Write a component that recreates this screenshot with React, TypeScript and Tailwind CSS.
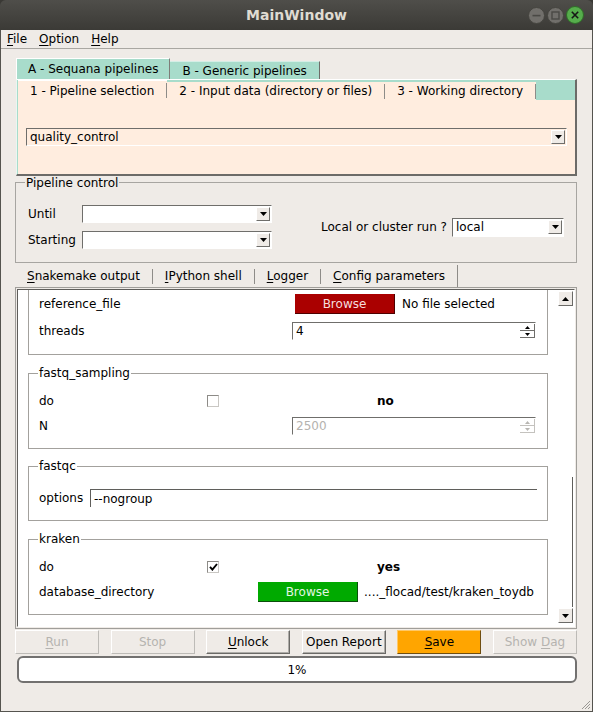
import type { ReactNode } from "react";

function Mn({ children }: { children: ReactNode }) {
  return <span className="underline decoration-1 underline-offset-[2px]">{children}</span>;
}

function DownArrow({ color = "#000" }: { color?: string }) {
  return (
    <svg width="7" height="4" viewBox="0 0 7 4">
      <path d="M0 0H7L3.5 4Z" fill={color} />
    </svg>
  );
}

function UpArrow({ color = "#000" }: { color?: string }) {
  return (
    <svg width="7" height="4" viewBox="0 0 7 4">
      <path d="M0 4H7L3.5 0Z" fill={color} />
    </svg>
  );
}

function Combo({ value, className = "" }: { value?: string; className?: string }) {
  return (
    <div
      className={`flex h-[18px] items-center border border-t-[#6f6e6b] border-l-[#6f6e6b] border-r-white border-b-white pr-px pl-[3px] ${className}`}
    >
      <span className="flex-1 overflow-hidden leading-[16px] whitespace-nowrap">{value}</span>
      <span className="flex h-[14px] w-[14px] shrink-0 items-center justify-center border border-t-white border-l-white border-r-[#6f6e6b] border-b-[#6f6e6b] bg-[#efebe7]">
        <DownArrow />
      </span>
    </div>
  );
}

function Spin({ value, disabled }: { value: string; disabled?: boolean }) {
  const fill = disabled ? "#b8b6b2" : "#000";
  return (
    <div className="flex h-[18px] w-[244px] items-center border border-t-[#6f6e6b] border-l-[#6f6e6b] border-r-white border-b-white bg-white pl-[3px]">
      <span className={disabled ? "flex-1 leading-none text-[#b4b2ae]" : "flex-1 leading-none"}>{value}</span>
      <span className="flex h-full w-[15px] flex-col py-px">
        <span
          className={
            disabled
              ? "flex flex-1 items-center justify-center border-r border-b border-[#c4c2be]"
              : "flex flex-1 items-center justify-center border-r border-b border-[#6f6e6b]"
          }
        >
          <svg width="5" height="3" viewBox="0 0 5 3">
            <path d="M0 3H5L2.5 0Z" fill={fill} />
          </svg>
        </span>
        <span
          className={
            disabled
              ? "flex flex-1 items-center justify-center border-r border-b border-[#c4c2be]"
              : "flex flex-1 items-center justify-center border-r border-b border-[#6f6e6b]"
          }
        >
          <svg width="5" height="3" viewBox="0 0 5 3">
            <path d="M0 0H5L2.5 3Z" fill={fill} />
          </svg>
        </span>
      </span>
    </div>
  );
}

function Check({ on }: { on?: boolean }) {
  return (
    <span className="flex h-[12px] w-[12px] shrink-0 items-center justify-center border border-t-[#8d8b87] border-l-[#8d8b87] border-r-[#c9c7c3] border-b-[#c9c7c3] bg-white">
      {on && (
        <svg width="9" height="8" viewBox="0 0 9 8">
          <path d="M1 3.8L3.4 6.6L8 1" stroke="#000" strokeWidth="1.9" fill="none" />
        </svg>
      )}
    </span>
  );
}

function Group({ title, children, className = "" }: { title?: string; children: ReactNode; className?: string }) {
  return (
    <div className={`relative w-[520px] border-[#a3a19d] ${className}`}>
      {title && (
        <span className="absolute top-[-8px] left-[9px] bg-white px-px leading-[14px]">{title}</span>
      )}
      {children}
    </div>
  );
}

function Sep({ tall }: { tall?: boolean }) {
  return <span className={tall ? "h-full w-px bg-[#8e8c88]" : "h-[15px] w-px bg-[#8e8c88]"} />;
}

function Button({ children, kind = "normal" }: { children: ReactNode; kind?: "normal" | "disabled" | "save" }) {
  const styles = {
    normal:
      "border-t-white border-l-white border-r-[#6b6a67] border-b-[#6b6a67] bg-[#efebe7] shadow-[inset_-1px_-1px_0_#aeaca8]",
    disabled: "border-t-white border-l-white border-r-[#bdbbb7] border-b-[#bdbbb7] bg-[#efebe7] text-[#b5b3af]",
    save: "border-t-[#ffc866] border-l-[#ffc866] border-r-[#6e4d10] border-b-[#6e4d10] bg-[#ffa500]",
  };
  return (
    <div className={`flex h-[24px] w-[84px] items-center justify-center border ${styles[kind]}`}>
      <span>{children}</span>
    </div>
  );
}

function TitleButtons() {
  return (
    <div className="flex items-center justify-end gap-[2px] pr-[9px]">
      <svg width="17" height="17" viewBox="0 0 17 17">
        <circle cx="8.5" cy="8.5" r="8" fill="#716f6b" stroke="#45443f" />
        <rect x="4.5" y="7.8" width="8" height="1.6" fill="#4a4945" />
      </svg>
      <svg width="17" height="17" viewBox="0 0 17 17">
        <circle cx="8.5" cy="8.5" r="8" fill="#716f6b" stroke="#45443f" />
        <rect x="5" y="5" width="7" height="7" fill="none" stroke="#4a4945" strokeWidth="1.4" />
      </svg>
      <svg width="18" height="18" viewBox="0 0 18 18">
        <circle cx="9" cy="9" r="8.5" fill="#56ad4c" stroke="#2f6b28" />
        <path d="M5.8 5.8L12.2 12.2M12.2 5.8L5.8 12.2" stroke="#161616" strokeWidth="1.6" />
      </svg>
    </div>
  );
}

export default function App() {
  return (
    <div className="flex h-[712px] w-[593px] flex-col overflow-hidden bg-[#3a3935] font-['DejaVu_Sans',sans-serif] text-[12px] text-black">
      {/* title bar */}
      <div className="grid h-[30px] shrink-0 grid-cols-[1fr_auto_1fr] items-center rounded-t-[6px] bg-gradient-to-b from-[#4f4e4a] to-[#3b3a36]">
        <span />
        <span className="text-[14px] font-bold text-[#dfdbd2]">MainWindow</span>
        <TitleButtons />
      </div>

      <div className="flex flex-1 flex-col border-x border-b border-[#55544f] bg-[#efebe7]">
        {/* menu */}
        <div className="flex h-[19px] shrink-0 items-center border-b border-[#a9a7a2]">
          <span className="px-[6px] leading-none">
            <Mn>F</Mn>ile
          </span>
          <span className="px-[6px] leading-none">
            <Mn>O</Mn>ption
          </span>
          <span className="px-[6px] leading-none">
            <Mn>H</Mn>elp
          </span>
        </div>

        <div className="flex flex-col pl-[14px]">
          {/* top tab widget */}
          <div className="mt-[9px] ml-px w-[561px]">
            <div className="flex h-[21px] items-end">
              <div className="flex h-[21px] items-center border-t border-l border-t-white border-l-white border-r border-r-[#7f7d79] bg-[#a8dccb] px-[11px]">
                A - Sequana pipelines
              </div>
              <div className="flex h-[18px] items-center border-t border-t-[#d5eee6] border-r border-r-[#6f6d69] bg-[#a8dccb] px-[12px]">
                B - Generic pipelines
              </div>
            </div>
            <div className="flex h-[97px] flex-col border-t border-l border-t-white border-l-[#eaf7f2] border-r-2 border-b-2 border-r-[#6c6b68] border-b-[#6c6b68] bg-[#a8dccb]">
              <div className="ml-px flex h-[20px] items-end">
                <div className="flex h-[20px] items-center border-t border-t-white bg-[#ffeddf]">
                  <span className="px-[12px]">1 - Pipeline selection</span>
                  <Sep />
                </div>
                <div className="flex h-[18px] items-center bg-[#ffeddf]">
                  <span className="px-[12px]">2 - Input data (directory or files)</span>
                  <Sep />
                </div>
                <div className="flex h-[18px] items-center bg-[#ffeddf]">
                  <span className="px-[12px]">3 - Working directory</span>
                  <Sep />
                </div>
              </div>
              <div className="ml-px flex-1 bg-[#ffeddf] px-[8px] pt-[28px]">
                <Combo value="quality_control" />
              </div>
            </div>
          </div>

          {/* pipeline control */}
          <div className="relative mt-[6px] flex w-[562px] items-center border border-[#a7a5a1] px-[12px] pt-[22px] pb-[13px]">
            <span className="absolute top-[-7px] left-[9px] bg-[#efebe7] px-px leading-[14px]">Pipeline control</span>
            <div className="flex flex-col gap-[8px]">
              <div className="flex h-[18px] items-center">
                <span className="w-[54px]">Until</span>
                <Combo className="w-[190px] bg-white" />
              </div>
              <div className="flex h-[18px] items-center">
                <span className="w-[54px]">Starting</span>
                <Combo className="w-[190px] bg-white" />
              </div>
            </div>
            <div className="flex flex-1 items-center justify-end">
              <span>Local or cluster run ?</span>
              <Combo value="local" className="ml-[5px] h-[19px] w-[112px] bg-white" />
            </div>
          </div>

          {/* lower tabs */}
          <div className="mt-[2px] flex h-[22px] items-center">
            <div className="flex h-full items-center">
              <span className="px-[12px]">
                <Mn>S</Mn>nakemake output
              </span>
              <Sep />
            </div>
            <div className="flex h-full items-center">
              <span className="px-[12px]">
                <Mn>I</Mn>Python shell
              </span>
              <Sep />
            </div>
            <div className="flex h-full items-center">
              <span className="px-[12px]">
                <Mn>L</Mn>ogger
              </span>
              <Sep />
            </div>
            <div className="flex h-full items-center">
              <span className="px-[12px]">
                <Mn>C</Mn>onfig parameters
              </span>
              <Sep tall />
            </div>
          </div>

          {/* config pane */}
          <div className="h-[342px] w-[562px] border border-[#a09e9a] p-px">
            <div className="flex h-full border border-t-[#5f5e5b] border-l-[#5f5e5b] border-r-white border-b-white bg-white">
              <div className="flex flex-1 flex-col overflow-hidden pl-[10px]">
                <Group className="border-x border-b pt-[4px] pb-[14px]">
                  <div className="flex h-[20px] items-center pl-[10px]">
                    <span className="w-[256px]">reference_file</span>
                    <span className="flex h-[20px] w-[100px] items-center justify-center border-r border-b border-[#4e0000] bg-[#aa0000] text-[#f6dede]">
                      Browse
                    </span>
                    <span className="ml-[7px]">No file selected</span>
                  </div>
                  <div className="mt-[8px] flex h-[18px] items-center pl-[10px]">
                    <span className="w-[253px]">threads</span>
                    <Spin value="4" />
                  </div>
                </Group>

                <Group title="fastq_sampling" className="mt-[18px] border pt-[18px] pb-[13px]">
                  <div className="flex h-[18px] items-center pl-[10px]">
                    <span className="w-[168px]">do</span>
                    <Check />
                    <span className="ml-[158px] font-bold">no</span>
                  </div>
                  <div className="mt-[7px] flex h-[18px] items-center pl-[10px]">
                    <span className="w-[253px]">N</span>
                    <Spin value="2500" disabled />
                  </div>
                </Group>

                <Group title="fastqc" className="mt-[17px] border pt-[22px] pb-[13px]">
                  <div className="flex h-[18px] items-center pl-[10px]">
                    <span className="w-[51px]">options</span>
                    <div className="flex h-[18px] w-[447px] items-center border-t border-l border-[#5f5e5b] pl-[3px]">
                      --nogroup
                    </div>
                  </div>
                </Group>

                <Group title="kraken" className="mt-[18px] border pt-[18px] pb-[12px]">
                  <div className="flex h-[18px] items-center pl-[10px]">
                    <span className="w-[168px]">do</span>
                    <Check on />
                    <span className="ml-[158px] font-bold">yes</span>
                  </div>
                  <div className="mt-[6px] flex h-[20px] items-center pl-[10px]">
                    <span className="w-[219px]">database_directory</span>
                    <span className="flex h-[20px] w-[100px] items-center justify-center border-r border-b border-[#0b4f0b] bg-[#00aa00] text-[#e3f7e3]">
                      Browse
                    </span>
                    <span className="ml-[6px]">...._flocad/test/kraken_toydb</span>
                  </div>
                </Group>
              </div>

              {/* scrollbar */}
              <div className="flex w-[17px] flex-col">
                <span className="mt-px ml-px flex h-[15px] w-[15px] items-center justify-center border border-t-white border-l-white border-r-[#6b6a67] border-b-[#6b6a67] bg-[#efebe7]">
                  <UpArrow />
                </span>
                <div className="flex flex-1 flex-col justify-end">
                  <div className="mr-[1px] mb-[1px] h-[130px] border-r border-[#5f5e5b]" />
                </div>
                <span className="mb-[3px] ml-px flex h-[15px] w-[15px] items-center justify-center border border-t-white border-l-white border-r-[#6b6a67] border-b-[#6b6a67] bg-[#efebe7]">
                  <DownArrow />
                </span>
              </div>
            </div>
          </div>

          {/* buttons */}
          <div className="mt-px flex w-[562px] justify-between">
            <Button kind="disabled">
              <Mn>R</Mn>un
            </Button>
            <Button kind="disabled">Stop</Button>
            <Button>
              <Mn>U</Mn>nlock
            </Button>
            <Button>Open Report</Button>
            <Button kind="save">
              <Mn>S</Mn>ave
            </Button>
            <Button kind="disabled">
              Show <Mn>D</Mn>ag
            </Button>
          </div>

          {/* progress */}
          <div className="mt-[2px] ml-[2px] flex h-[27px] w-[560px] items-center justify-center rounded-[6px] border-2 border-[#727170] bg-white">
            1%
          </div>
        </div>

        <div className="flex flex-1 items-end justify-end">
          <svg width="12" height="12" viewBox="0 0 12 12" className="mr-px mb-px">
            <path d="M11 3L3 11M11 6L6 11M11 9L9 11" stroke="#9a9894" strokeWidth="1" />
          </svg>
        </div>
      </div>
    </div>
  );
}
